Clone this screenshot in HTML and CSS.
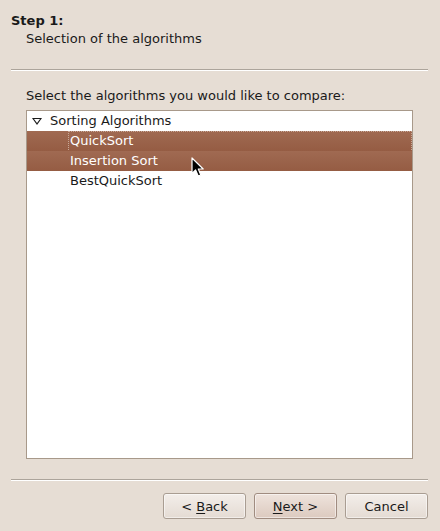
FILE: index.html
```html
<!DOCTYPE html>
<html>
<head>
<meta charset="utf-8">
<link rel="stylesheet" href="styles.css">
</head>
<body>
<div class="dialog">
  <div class="header">
    <div class="step">Step 1:</div>
    <div class="subtitle">Selection of the algorithms</div>
  </div>
  <div class="sep"></div>
  <div class="content">
    <div class="prompt">Select the algorithms you would like to compare:</div>
    <div class="tree">
      <div class="row parent"><span class="expander"></span>Sorting Algorithms</div>
      <div class="row child selected focus">QuickSort</div>
      <div class="row child selected">Insertion Sort
        <svg class="cursor" width="14" height="21" viewBox="0 0 14 21"><path d="M1 1 L1 16.5 L4.6 13 L7.2 19 L9.8 18 L7.3 12 L12.2 12 Z" fill="#000" stroke="#fff" stroke-width="1.2" stroke-linejoin="round"/></svg>
      </div>
      <div class="row child">BestQuickSort</div>
    </div>
  </div>
  <div class="sep bottom"></div>
  <div class="buttons">
    <button class="btn">&lt; <u>B</u>ack</button>
    <button class="btn default"><u>N</u>ext &gt;</button>
    <button class="btn">Cancel</button>
  </div>
</div>
</body>
</html>
```
FILE: styles.css
```css
html, body {
  margin: 0;
  padding: 0;
  background: #e6ddd4;
}
body {
  width: 440px;
  height: 531px;
  font-family: "DejaVu Sans", sans-serif;
  font-size: 13px;
  color: #1a1a1a;
}
.dialog {
  display: flex;
  flex-direction: column;
  height: 531px;
}
.header {
  padding: 13px 0 0 11px;
  height: 56px;
  box-sizing: border-box;
}
.step {
  font-weight: bold;
  line-height: 16px;
  color: #1a1a1a;
}
.subtitle {
  padding-left: 15px;
  line-height: 17px;
  margin-top: 1px;
}
.sep {
  margin: 13px 12px 0 11px;
  height: 1px;
  background: #aca49b;
  border-bottom: 1px solid #ffffff;
}
.content {
  padding: 16px 27px 0 26px;
  display: flex;
  flex-direction: column;
}
.prompt {
  line-height: 17px;
  margin-bottom: 6px;
}
.tree {
  height: 349px;
  box-sizing: border-box;
  background: #ffffff;
  border: 1px solid #a8998a;
  padding-top: 0;
}
.row {
  height: 20px;
  line-height: 20px;
  position: relative;
  box-sizing: border-box;
}
.parent {
  padding-left: 6px;
  display: flex;
  align-items: center;
}
.expander {
  width: 0;
  height: 0;
  border-left: 4px solid transparent;
  border-right: 4px solid transparent;
  border-top: 6px solid #ffffff;
  position: relative;
  margin-right: 9px;
  margin-top: 1px;
}
.expander::before {
  content: "";
  position: absolute;
  left: -5px;
  top: -7px;
  width: 0;
  height: 0;
  border-left: 5px solid transparent;
  border-right: 5px solid transparent;
  border-top: 7px solid #1a1a1a;
}
.expander::after {
  content: "";
  position: absolute;
  left: -3px;
  top: -6px;
  width: 0;
  height: 0;
  border-left: 3px solid transparent;
  border-right: 3px solid transparent;
  border-top: 4px solid #ffffff;
}
.child {
  padding-left: 43px;
}
.selected {
  background: linear-gradient(#a06a52, #955c43);
  color: #ffffff;
}
.focus::after {
  content: "";
  position: absolute;
  left: 41px;
  right: 0;
  top: 0;
  bottom: -1px;
  border: 1px dotted #c8a898;
  pointer-events: none;
}
.cursor {
  position: absolute;
  left: 164px;
  top: 6px;
}
.sep.bottom {
  margin-top: 20px;
}
.buttons {
  display: flex;
  justify-content: flex-end;
  gap: 8px;
  padding: 12px 12px 0 0;
}
.btn {
  width: 83px;
  height: 26px;
  font-family: "DejaVu Sans", sans-serif;
  font-size: 13px;
  color: #1a1a1a;
  border: 1px solid #a99d92;
  border-radius: 3px;
  background: linear-gradient(#f3eeea, #e4dbd3);
  padding: 0;
  box-shadow: inset 0 0 0 1px rgba(255,255,255,0.5);
}
.btn.default {
  background: linear-gradient(#eee3dc, #dccabf);
  border-color: #a08c80;
}
.btn u {
  text-decoration-thickness: 1px;
  text-underline-offset: 2px;
}
```
